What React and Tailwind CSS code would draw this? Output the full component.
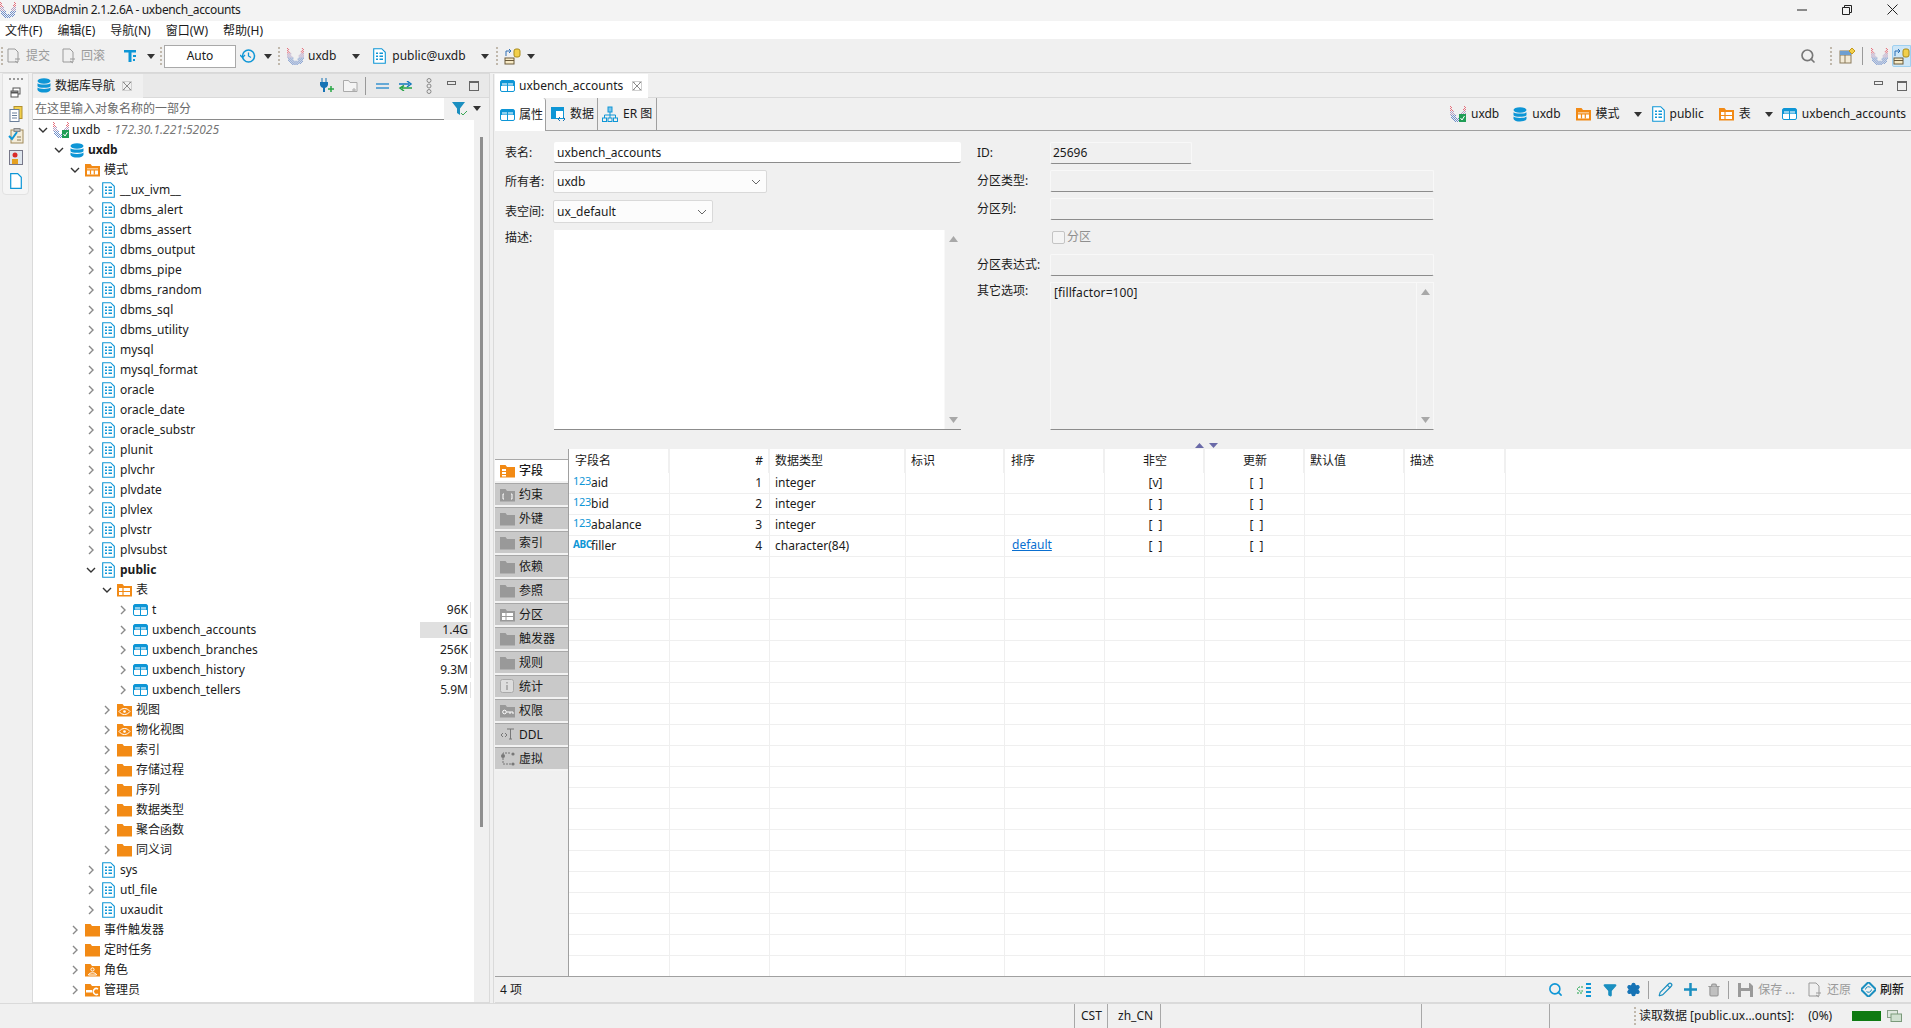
import React from 'react';
import { Search, Pencil, Trash2, Filter, Settings } from 'lucide-react';

const BLUE = '#0e96d6';
const ORANGE = '#f28a15';

// --- Small icon drawings ---
const UxLogo = ({ size = 16 }) => {
  // dotted wings of the product logo, red on top and blue at the bottom
  const dots = [];
  for (let y = 0; y < 16; y++) {
    for (let x = 0; x < 16; x++) {
      if ((x + y) % 2) continue;
      const dx = Math.abs(x - 7.5);
      const outer = y < 8 ? dx <= 7.5 : dx * dx + (y - 8) * (y - 8) <= 60;
      const inner = y < 12 && dx < 6.5 - y * 0.45;
      if (!outer || inner) continue;
      const color = y < 5 ? '#e5707c' : y < 9 ? '#b4a0c4' : '#6f8fca';
      dots.push(<rect key={`${x}-${y}`} x={x} y={y} width="1" height="1" fill={color} />);
    }
  }
  return <svg width={size} height={size} viewBox="0 0 16 16" className="shrink-0">{dots}</svg>;
};

const UxConnected = () => (
  <span className="relative inline-block w-[16px] h-[16px] shrink-0">
    <UxLogo />
    <svg width="7" height="8" viewBox="0 0 7 8" className="absolute right-0 bottom-0"><rect width="7" height="8" fill="#1f9d55" /><path d="M1.5 4l1.5 2 2.500-4" stroke="#fff" fill="none" /></svg>
  </span>
);

const DbIcon = () => (
  <svg width="14" height="15" viewBox="0 0 14 15" className="shrink-0">
    <ellipse cx="7" cy="3" rx="6.500" ry="2.800" fill={BLUE} />
    <path d="M.5 5.200c1 1.800 12 1.800 13 0v3c-1 2-12 2-13 0z" fill={BLUE} />
    <path d="M.5 9.600c1 1.800 12 1.800 13 0v2.400c-1 3.400-12 3.400-13 0z" fill={BLUE} />
  </svg>
);

const SchemaIcon = () => (
  <svg width="13" height="16" viewBox="0 0 13 16" className="shrink-0">
    <path d="M.7.7h8l3.600 3.600v11H.7z" fill="#fff" stroke={BLUE} strokeWidth="1.100" />
    <path d="M3 4.500h2v1.500H3zM6.500 4.500h3.500v1.500H6.500zM3 7.500h2V9H3zM6.500 7.500h3.500V9H6.500zM3 10.500h2V12H3zM6.500 10.500h3.500V12H6.500z" fill={BLUE} />
  </svg>
);

const TableIcon = () => (
  <svg width="15" height="12" viewBox="0 0 15 12" className="shrink-0">
    <rect x=".5" y=".5" width="14" height="11" rx="1.500" fill="#fff" stroke={BLUE} />
    <rect x="1" y="1" width="13" height="5" fill={BLUE} />
    <rect x="2" y="3" width="5" height="2.600" fill="#8fd0ee" />
    <rect x="8" y="3" width="5" height="2.600" fill="#8fd0ee" />
    <path d="M7.500 1v10" stroke={BLUE} />
  </svg>
);

const Folder = ({ color = ORANGE, children }) => (
  <svg width="15" height="14" viewBox="0 0 15 14" className="shrink-0">
    <path d="M0 1h5.500l1.500 2h8v10.500H0z" fill={color} />
    {children}
  </svg>
);

const FolderSchema = () => <Folder><path d="M2 5.500h11v6H2z" fill="#fff" /><path d="M2 6.800h11M5.500 7v4.500M9.300 7v4.500" stroke={ORANGE} strokeWidth="1.200" /></Folder>;
const FolderTable = () => <Folder><path d="M2 5h11v7H2z" fill="#fff" /><path d="M2 8.500h11M6 5v7" stroke={ORANGE} strokeWidth="1.200" /></Folder>;
const FolderEye = () => <Folder><path d="M2 8.500c3-4 8-4 11 0-3 4-8 4-11 0z" fill="none" stroke="#fff" /><circle cx="7.500" cy="8.500" r="1.300" fill="#fff" /></Folder>;
const FolderRole = () => <Folder><circle cx="7.500" cy="6.500" r="1.600" fill="none" stroke="#fff" /><path d="M3.500 12c0-3 8-3 8 0z" fill="none" stroke="#fff" /></Folder>;
const FolderAdmin = () => <Folder><path d="M1 7h6v2.500H1z" fill="#fff" /><path d="M13 6a3 3 0 1 0 0 5" fill="none" stroke="#fff" strokeWidth="1.500" /></Folder>;

const ICONS = {
  ux: <UxConnected />, db: <DbIcon />, schema: <SchemaIcon />, table: <TableIcon />, folder: <Folder />,
  fSchema: <FolderSchema />, fTable: <FolderTable />, fEye: <FolderEye />, fRole: <FolderRole />, fAdmin: <FolderAdmin />,
};

const Chevron = ({ open }) => (
  <svg width="10" height="10" viewBox="0 0 10 10">
    {open
      ? <path d="M1 3l4 4 4-4" stroke="#333" strokeWidth="1.400" fill="none" />
      : <path d="M3 1l4 4-4 4" stroke="#8a8a8a" strokeWidth="1.400" fill="none" />}
  </svg>
);

const Caret = ({ className = '' }) => (
  <svg width="8" height="5" viewBox="0 0 8 5" className={`shrink-0 ${className}`}><path d="M0 0h8L4 5z" fill="#333" /></svg>
);

const Grip = ({ className = '' }) => (
  <span className={`flex flex-col gap-[2px] shrink-0 ${className}`}>
    {[0, 1, 2, 3, 4].map(i => <span key={i} className="w-[2px] h-[2px] bg-[#c0b8ac]" />)}
  </span>
);

const DocAction = ({ color = '#9a9a9a' }) => (
  <svg width="14" height="16" viewBox="0 0 14 16" className="shrink-0">
    <path d="M1 1h7l3 3v10H1z" fill="none" stroke={color} />
    <path d="M8 11h5M8 13l3 2" stroke={color} />
  </svg>
);

const TreeTool = () => (
  <svg width="14" height="14" viewBox="0 0 14 14" className="shrink-0">
    <path d="M1 1h12v2.500H8.500V13H5.500V3.500H1z" fill={BLUE} />
    <path d="M10 6h3v2h-3zM10 10h2v2h-2z" fill={BLUE} />
  </svg>
);

const SwitchDb = ({ size = 17 }) => (
  <svg width={size} height={size} viewBox="0 0 17 17" className="shrink-0">
    <rect x="1" y="10" width="9" height="6" fill="#f7e9c4" stroke="#6b5a3a" />
    <path d="M1 12.500h9" stroke="#6b5a3a" />
    <path d="M2 8V3h5M5 1l2 2-2 2" stroke="#2f6fb5" fill="none" />
    <rect x="10" y="1" width="6" height="8" rx="2" fill="#f2cf4a" stroke="#a88b1c" />
  </svg>
);

const FunnelCheck = () => (
  <svg width="16" height="16" viewBox="0 0 16 16" className="shrink-0">
    <path d="M0 1h13L8 7.500V14L5 12V7.500z" fill="#1b8fc0" />
    <path d="M9 12l2 2 4-4" stroke="#3aa655" fill="none" />
  </svg>
);

const WinMin = () => <svg width="10" height="10" viewBox="0 0 10 10"><path d="M0 5h10" stroke="#222" /></svg>;
const WinRestore = () => <svg width="10" height="10" viewBox="0 0 10 10"><path d="M.5 2.500h7v7h-7zM2.500 2.500v-2h7v7h-2" fill="none" stroke="#222" /></svg>;
const WinClose = () => <svg width="11" height="11" viewBox="0 0 11 11"><path d="M.5.5l10 10M10.500.5l-10 10" stroke="#222" /></svg>;

const ViewMin = ({ className = '' }) => <span className={`block w-[9px] h-[4px] border border-[#666] shrink-0 ${className}`} />;
const ViewMax = ({ className = '' }) => <span className={`block w-[10px] h-[10px] border border-[#666] border-t-2 shrink-0 ${className}`} />;

const CloseX = () => (
  <svg width="10" height="10" viewBox="0 0 10 10" className="shrink-0"><path d="M1 1l8 8M9 1l-8 8M1 1h2M9 1H7M1 9h2M9 9H7" stroke="#8b8b8b" fill="none" /><rect x=".5" y=".5" width="9" height="9" fill="none" stroke="#d0d0d0" /></svg>
);

// --- Tree data ---
const SCHEMAS = ['__ux_ivm__', 'dbms_alert', 'dbms_assert', 'dbms_output', 'dbms_pipe', 'dbms_random', 'dbms_sql', 'dbms_utility', 'mysql', 'mysql_format', 'oracle', 'oracle_date', 'oracle_substr', 'plunit', 'plvchr', 'plvdate', 'plvlex', 'plvstr', 'plvsubst'];

const TREE = [
  { d: 0, icon: 'ux', label: 'uxdb', open: true, note: ' - 172.30.1.221:52025' },
  { d: 1, icon: 'db', label: 'uxdb', open: true, bold: true },
  { d: 2, icon: 'fSchema', label: '模式', open: true },
  ...SCHEMAS.map(label => ({ d: 3, icon: 'schema', label })),
  { d: 3, icon: 'schema', label: 'public', open: true, bold: true },
  { d: 4, icon: 'fTable', label: '表', open: true },
  { d: 5, icon: 'table', label: 't', size: '96K' },
  { d: 5, icon: 'table', label: 'uxbench_accounts', size: '1.4G', hot: true },
  { d: 5, icon: 'table', label: 'uxbench_branches', size: '256K' },
  { d: 5, icon: 'table', label: 'uxbench_history', size: '9.3M' },
  { d: 5, icon: 'table', label: 'uxbench_tellers', size: '5.9M' },
  { d: 4, icon: 'fEye', label: '视图' },
  { d: 4, icon: 'fEye', label: '物化视图' },
  { d: 4, icon: 'folder', label: '索引' },
  { d: 4, icon: 'folder', label: '存储过程' },
  { d: 4, icon: 'folder', label: '序列' },
  { d: 4, icon: 'folder', label: '数据类型' },
  { d: 4, icon: 'folder', label: '聚合函数' },
  { d: 4, icon: 'folder', label: '同义词' },
  { d: 3, icon: 'schema', label: 'sys' },
  { d: 3, icon: 'schema', label: 'utl_file' },
  { d: 3, icon: 'schema', label: 'uxaudit' },
  { d: 2, icon: 'folder', label: '事件触发器' },
  { d: 2, icon: 'folder', label: '定时任务' },
  { d: 2, icon: 'fRole', label: '角色' },
  { d: 2, icon: 'fAdmin', label: '管理员' },
];

const TreeRow = ({ node }) => (
  <div className="flex items-center h-[20px] relative">
    <span style={{ width: 15 + 16 * node.d }} className="flex justify-end shrink-0"><Chevron open={node.open} /></span>
    <span className="w-[15px] ml-[5px] flex justify-center shrink-0">{ICONS[node.icon]}</span>
    <span className={`ml-[4px] ${node.bold ? 'font-bold' : ''}`}>{node.label}</span>
    {node.note && <span className="ml-[7px] italic text-[#777]">{node.note}</span>}
    {node.size && (
      <span className={`absolute right-[3px] top-[2px] w-[51px] h-[16px] flex items-center justify-end pr-[2px] border-r border-[#e4e4e4] ${node.hot ? 'bg-[#e0e0e0]' : ''}`}>{node.size}</span>
    )}
  </div>
);

// --- Grid data ---
const COLUMNS = [
  { w: 'w-[101px]', label: '字段名', cls: 'pl-[6px]' },
  { w: 'w-[100px]', label: '#', cls: 'justify-end pr-[5px]' },
  { w: 'w-[136px]', label: '数据类型', cls: 'pl-[5px]' },
  { w: 'w-[99px]', label: '标识', cls: 'pl-[5px]' },
  { w: 'w-[100px]', label: '排序', cls: 'pl-[6px]' },
  { w: 'w-[100px]', label: '非空', cls: 'justify-center pl-[2px]' },
  { w: 'w-[100px]', label: '更新', cls: 'justify-center pl-[2px]' },
  { w: 'w-[100px]', label: '默认值', cls: 'pl-[5px]' },
  { w: 'w-[101px]', label: '描述', cls: 'pl-[5px]' },
];

const FIELDS = [
  { kind: '123', name: 'aid', type: 'integer', notNull: '[v]' },
  { kind: '123', name: 'bid', type: 'integer', notNull: '[  ]' },
  { kind: '123', name: 'abalance', type: 'integer', notNull: '[  ]' },
  { kind: 'ABC', name: 'filler', type: 'character(84)', notNull: '[  ]', order: 'default' },
];

const SIDE_TABS = [
  { label: '字段', active: true },
  { label: '约束', glyph: 'bracket' },
  { label: '外键' },
  { label: '索引' },
  { label: '依赖' },
  { label: '参照' },
  { label: '分区', glyph: 'table' },
  { label: '触发器' },
  { label: '规则' },
  { label: '统计', glyph: 'info' },
  { label: '权限', glyph: 'key' },
  { label: 'DDL', glyph: 'ddl' },
  { label: '虚拟', glyph: 'virtual' },
];

const SideGlyph = ({ tab }) => {
  if (tab.active) return <Folder><path d="M2 5h4v2H2zM2 8h4v2H2zM2 11h4v1.500H2z" fill="#fff" /></Folder>;
  if (tab.glyph === 'bracket') return <Folder color="#999"><path d="M4 6H3v5h1M11 6h1v5h-1" fill="none" stroke="#fff" /></Folder>;
  if (tab.glyph === 'table') return <Folder color="#999"><path d="M2 5h11v7H2z" fill="#fff" /><path d="M2 8.500h11M6 5v7" stroke="#999" /></Folder>;
  if (tab.glyph === 'key') return <Folder color="#999"><circle cx="4.500" cy="8" r="1.800" fill="none" stroke="#fff" /><path d="M6.500 8H13v2M10 8v2" stroke="#fff" fill="none" /></Folder>;
  if (tab.glyph === 'info') return <svg width="15" height="15" viewBox="0 0 15 15" className="shrink-0"><rect x=".5" y=".5" width="13" height="13" rx="2" fill="#ddd" stroke="#aaa" /><path d="M7 3v1.500M7 6v5" stroke="#999" strokeWidth="1.400" /></svg>;
  if (tab.glyph === 'ddl') return <svg width="15" height="13" viewBox="0 0 15 13" className="shrink-0"><path d="M3 5L1 7l2 2M5 5l2 2-2 2M7 1h7M10.500 1v10M9 11h3" stroke="#777" fill="none" /></svg>;
  if (tab.glyph === 'virtual') return <svg width="15" height="15" viewBox="0 0 15 15" className="shrink-0"><circle cx="3" cy="5" r="2" fill="#777" /><circle cx="13" cy="3" r="1.600" fill="#777" /><circle cx="13" cy="13" r="1.600" fill="#777" /><path d="M3 7v6h8M3 3V2h8" stroke="#777" fill="none" strokeDasharray="2 1" /></svg>;
  return <Folder color="#999" />;
};

const ScrollArrows = () => (
  <div className="absolute right-0 top-0 bottom-0 w-[17px] bg-[#f0f0f0] border-l border-[#f8f8f8] flex flex-col justify-between items-center py-[6px]">
    <svg width="9" height="6" viewBox="0 0 9 6"><path d="M4.500 0L9 6H0z" fill="#a8a8a8" /></svg>
    <svg width="9" height="6" viewBox="0 0 9 6"><path d="M0 0h9L4.500 6z" fill="#a8a8a8" /></svg>
  </div>
);

const ComboBox = ({ value, w }) => (
  <div className={`${w} h-[23px] bg-[#fcfcfc] border border-[#d9d9d9] rounded-[2px] flex items-center justify-between pl-[3px] pr-[5px]`}>
    <span>{value}</span>
    <svg width="10" height="6" viewBox="0 0 10 6"><path d="M1 1l4 4 4-4" stroke="#666" fill="none" /></svg>
  </div>
);

const ReadOnlyBox = ({ w = 'w-[384px]', children }) => (
  <div className={`${w} h-[22px] border border-[#f8f8f8] border-b-[#8c8c8c] rounded-[2px] flex items-center pl-[2px] pt-[1px]`}>{children}</div>
);

const BreadCrumb = ({ icon, label, caret, ml }) => (
  <span className={`flex items-center ${ml}`}>
    {icon}
    <span className="ml-[5px]">{label}</span>
    {caret && <Caret className="ml-[14px]" />}
  </span>
);

export default function App() {
  return (
    <div className="w-[1911px] h-[1028px] overflow-hidden flex flex-col bg-[#f0f0f0] text-[12px] text-[#1a1a1a] [font-family:'Noto_Sans','Noto_Sans_CJK_SC',sans-serif]">
      {/* Title bar */}
      <div className="h-[21px] bg-[#f3f3f3] flex items-center shrink-0 pb-[2px]">
        <UxLogo />
        <span className="ml-[6px] tracking-[-0.35px]">UXDBAdmin 2.1.2.6A - uxbench_accounts</span>
        <span className="ml-auto flex items-center">
          <WinMin />
          <span className="ml-[35px]"><WinRestore /></span>
          <span className="ml-[35px] mr-[13px]"><WinClose /></span>
        </span>
      </div>

      {/* Menu bar */}
      <div className="h-[18px] bg-white flex items-center pl-[5px] gap-[15px] pt-[2px] shrink-0">
        {['文件(F)', '编辑(E)', '导航(N)', '窗口(W)', '帮助(H)'].map(m => <span key={m}>{m}</span>)}
      </div>

      {/* Main toolbar */}
      <div className="h-[34px] flex items-center pt-[1px] border-b border-[#d8d8d8] shrink-0">
        <Grip className="ml-[1px]" />
        <span className="ml-[4px]"><DocAction /></span>
        <span className="ml-[5px] text-[#9a9a9a]">提交</span>
        <span className="ml-[12px]"><DocAction /></span>
        <span className="ml-[5px] text-[#9a9a9a]">回滚</span>
        <span className="ml-[18px]"><TreeTool /></span>
        <Caret className="ml-[10px]" />
        <Grip className="ml-[5px]" />
        <div className="ml-[2px] w-[72px] h-[23px] bg-white border border-[#a9a9a9] flex items-center justify-center">Auto</div>
        <svg width="16" height="16" viewBox="0 0 16 16" className="ml-[4px] shrink-0"><circle cx="8.500" cy="8" r="6" fill="none" stroke={BLUE} strokeWidth="1.500" /><path d="M8.500 4.500V8l2.500 1.500M0 7l2.500 2.500L5 7" fill="none" stroke={BLUE} strokeWidth="1.300" /></svg>
        <Caret className="ml-[8px]" />
        <Grip className="ml-[6px]" />
        <span className="ml-[7px]"><UxLogo size={17} /></span>
        <span className="ml-[4px]">uxdb</span>
        <Caret className="ml-[16px]" />
        <span className="ml-[13px]"><SchemaIcon /></span>
        <span className="ml-[6px]">public@uxdb</span>
        <Caret className="ml-[15px]" />
        <Grip className="ml-[7px]" />
        <span className="ml-[6px]"><SwitchDb /></span>
        <Caret className="ml-[6px]" />
        <span className="ml-auto"><Search size={16} strokeWidth={2.500} color="#777" /></span>
        <Grip className="ml-[14px]" />
        <svg width="16" height="16" viewBox="0 0 16 16" className="ml-[7px] shrink-0"><rect x="1" y="3" width="11" height="12" fill="#f3ead6" stroke="#8a7a5a" /><path d="M1 7h11M6 3v12" stroke="#8a7a5a" /><rect x="1" y="3" width="11" height="4" fill="#6f9fd0" /><path d="M13 0l3 3-3 3-3-3z" fill="#f2cf4a" stroke="#c49a1c" /></svg>
        <span className="ml-[7px] w-px h-[18px] bg-[#9a9a9a]" />
        <span className="ml-[8px]"><UxLogo size={17} /></span>
        <span className="ml-[4px] w-[19px] h-[22px] bg-[#cde6f7] border border-[#9fd0f0] rounded-l-[2px] flex items-center overflow-hidden"><SwitchDb /></span>
      </div>

      {/* Workbench */}
      <div className="flex-1 flex min-h-0">
        {/* Trim strip */}
        <div className="w-[32px] shrink-0 pl-[2px]">
          <div className="w-[27px] h-[122px] bg-[#f5f5f5] border border-[#e2e2e2] rounded-b-[4px] flex flex-col items-center pt-[4px]">
            <span className="flex gap-[2px]">{[0, 1, 2, 3].map(i => <span key={i} className="w-[2px] h-[2px] bg-[#999]" />)}</span>
            <svg width="12" height="12" viewBox="0 0 12 12" className="mt-[7px]"><rect x="3" y="1" width="7" height="6" fill="#fff" stroke="#555" /><rect x="1" y="4" width="7" height="6" fill="#fff" stroke="#555" /><path d="M1 5.500h7" stroke="#555" strokeWidth="2" /></svg>
            <svg width="14" height="16" viewBox="0 0 14 16" className="mt-[7px]"><rect x="5" y="0.500" width="8" height="12" fill="#f2cf4a" stroke="#b09030" /><rect x="1" y="3.500" width="9" height="12" fill="#fff" stroke="#6a7f9a" /><path d="M3 7h5M3 9.500h5M3 12h5" stroke="#6a7f9a" /></svg>
            <svg width="16" height="16" viewBox="0 0 16 16" className="mt-[6px]"><rect x="3" y="2" width="12" height="13" fill="#f4ecd8" stroke="#a08a5a" /><rect x="6" y="0.500" width="6" height="3" fill="#bbb" stroke="#888" /><path d="M1 8l3 3 5-7" stroke={BLUE} strokeWidth="2" fill="none" /><path d="M9 9h4M9 12h4" stroke="#8a7a5a" /></svg>
            <svg width="14" height="15" viewBox="0 0 14 15" className="mt-[6px]"><rect x=".5" y=".5" width="13" height="14" fill="#dfe6ee" stroke="#778" /><circle cx="6" cy="5" r="2.500" fill="#d92b2b" /><rect x="3" y="9" width="6" height="5" fill="#e5a020" /></svg>
            <svg width="12" height="16" viewBox="0 0 12 16" className="mt-[8px]"><path d="M.7.7h7l3.600 3.600v11H.7z" fill="#fff" stroke={BLUE} strokeWidth="1.200" /></svg>
          </div>
        </div>

        {/* Navigator panel */}
        <div className="w-[458px] shrink-0 border border-[#dadada] flex flex-col min-h-0">
          <div className="h-[24px] bg-[#e9e9e9] border-b border-[#dadada] flex items-center shrink-0">
            <div className="w-[110px] h-[24px] bg-[#f0f0f0] flex items-center pl-[4px] shrink-0 whitespace-nowrap">
              <DbIcon />
              <span className="ml-[4px]">数据库导航</span>
              <span className="ml-[7px]"><CloseX /></span>
            </div>
            <svg width="15" height="15" viewBox="0 0 15 15" className="ml-[177px] shrink-0"><path d="M2 1v3M6 1v3M0 4h8v3a4 4 0 0 1-3 3v4H3v-4a4 4 0 0 1-3-3z" fill="#1673b5" /><path d="M2 0v4M6 0v4" stroke="#1673b5" /><path d="M11 8v6M8 11h6" stroke="#28a745" strokeWidth="1.500" /></svg>
            <svg width="16" height="14" viewBox="0 0 16 14" className="ml-[8px] shrink-0"><path d="M.5 1.500h5l1.500 2h7v9H.5z" fill="#f4f4f4" stroke="#aaa" /><path d="M11 9v4M9 11h4" stroke="#aaa" /></svg>
            <span className="ml-[6px] w-px h-[18px] bg-[#999] shrink-0" />
            <svg width="13" height="6" viewBox="0 0 13 6" className="ml-[10px] shrink-0"><path d="M0 1h13M0 5h13" stroke="#3a94d0" strokeWidth="1.500" /></svg>
            <svg width="15" height="10" viewBox="0 0 15 10" className="ml-[9px] shrink-0"><path d="M1 3h10M9 0l4 3-4 3" stroke="#1378bd" strokeWidth="1.500" fill="none" /><path d="M14 7H4M6 4.500L2 7l4 3" stroke="#25a345" strokeWidth="1.500" fill="none" /></svg>
            <svg width="6" height="16" viewBox="0 0 6 16" className="ml-[13px] shrink-0"><circle cx="3" cy="2.500" r="2" fill="none" stroke="#888" /><circle cx="3" cy="8" r="2" fill="none" stroke="#888" /><circle cx="3" cy="13.500" r="2" fill="none" stroke="#888" /></svg>
            <ViewMin className="ml-[15px] -mt-[6px]" />
            <ViewMax className="ml-[13px]" />
          </div>
          <div className="h-[22px] flex shrink-0">
            <div className="w-[411px] bg-white border-b border-[#8a8a8a] flex items-center pl-[2px] pt-[1px] text-[#6a6a6a]">在这里输入对象名称的一部分</div>
            <span className="ml-[8px] mt-[3px]"><FunnelCheck /></span>
            <Caret className="ml-[5px] mt-[8px]" />
          </div>
          <div className="flex-1 flex min-h-0">
            <div className="w-[441px] bg-white overflow-hidden">
              {TREE.map((node, i) => <TreeRow key={i} node={node} />)}
            </div>
            <div className="flex-1 pl-[6px] pt-[17px]">
              <div className="w-[3px] h-[690px] bg-[#8f8f8f]" />
            </div>
          </div>
        </div>

        {/* Editor panel */}
        <div className="flex-1 mt-[1px] ml-[3px] border-l border-[#dadada] pl-px flex flex-col min-w-0">
          <div className="h-[24px] border-b border-[#dadada] flex items-center shrink-0">
            <div className="w-[153px] h-[24px] bg-white flex items-center pl-[5px] pt-[1px]">
              <TableIcon />
              <span className="ml-[4px]">uxbench_accounts</span>
              <span className="ml-[9px]"><CloseX /></span>
            </div>
            <ViewMin className="ml-auto -mt-[6px]" />
            <ViewMax className="ml-[14px] mr-[4px]" />
          </div>

          <div className="h-[33px] border-b border-[#a0a0a0] flex shrink-0 relative">
            <div className="w-[51px] h-[33px] bg-white border-r border-[#a0a0a0] rounded-tr-[3px] flex items-center pl-[5px]">
              <TableIcon /><span className="ml-[4px]">属性</span>
            </div>
            <div className="w-[52px] border-r border-[#a0a0a0] flex items-center pl-[5px]">
              <svg width="15" height="15" viewBox="0 0 15 15" className="shrink-0"><rect x=".5" y=".5" width="12" height="11" fill="#fff" stroke={BLUE} /><rect x="1" y="1" width="11" height="3" fill={BLUE} /><rect x="1" y="4" width="4" height="7" fill={BLUE} /><path d="M9 10l-2 2 2 2M12 10l2 2-2 2" stroke="#1673b5" fill="none" /></svg>
              <span className="ml-[4px]">数据</span>
            </div>
            <div className="w-[59px] border-r border-[#a0a0a0] flex items-center pl-[4px]">
              <svg width="16" height="16" viewBox="0 0 16 16" className="shrink-0"><rect x="6" y="1" width="4" height="5" fill="#7cc4ea" stroke={BLUE} /><path d="M8 6v3M2.500 12V9h11v3M8 9v3" stroke={BLUE} fill="none" /><rect x=".5" y="12" width="4" height="3.500" fill="none" stroke={BLUE} /><rect x="6" y="12" width="4" height="3.500" fill="none" stroke={BLUE} /><rect x="11.500" y="12" width="4" height="3.500" fill="none" stroke={BLUE} /></svg>
              <span className="ml-[5px]">ER 图</span>
            </div>
            <div className="ml-auto flex items-center pr-[5px]">
              <BreadCrumb icon={<UxConnected />} label="uxdb" />
              <BreadCrumb icon={<DbIcon />} label="uxdb" ml="ml-[14px]" />
              <BreadCrumb icon={<FolderSchema />} label="模式" caret ml="ml-[15px]" />
              <BreadCrumb icon={<SchemaIcon />} label="public" ml="ml-[10px]" />
              <BreadCrumb icon={<FolderTable />} label="表" caret ml="ml-[15px]" />
              <BreadCrumb icon={<TableIcon />} label="uxbench_accounts" ml="ml-[9px]" />
            </div>
          </div>

          {/* Properties form */}
          <div className="h-[318px] flex shrink-0">
            <div className="w-[482px] pl-[10px] pt-[11px] shrink-0">
              <div className="flex items-center h-[21px]">
                <span className="w-[49px]">表名:</span>
                <div className="w-[407px] h-[21px] bg-white border-b border-[#8c8c8c] rounded-[2px] flex items-center pl-[3px] pt-[1px]">uxbench_accounts</div>
              </div>
              <div className="flex items-center mt-[7px]">
                <span className="w-[48px]">所有者:</span>
                <ComboBox value="uxdb" w="w-[214px]" />
              </div>
              <div className="flex items-center mt-[7px]">
                <span className="w-[48px]">表空间:</span>
                <ComboBox value="ux_default" w="w-[160px]" />
              </div>
              <div className="flex mt-[7px]">
                <span className="w-[49px] -mt-[1px]">描述:</span>
                <div className="w-[407px] h-[200px] bg-white border-b border-[#8c8c8c] relative"><ScrollArrows /></div>
              </div>
            </div>
            <div className="pt-[11px]">
              <div className="flex items-center h-[21px]">
                <span className="w-[73px]">ID:</span>
                <ReadOnlyBox w="w-[142px]">25696</ReadOnlyBox>
              </div>
              <div className="flex items-center mt-[7px]">
                <span className="w-[73px]">分区类型:</span>
                <ReadOnlyBox />
              </div>
              <div className="flex items-center mt-[6px]">
                <span className="w-[73px]">分区列:</span>
                <ReadOnlyBox />
              </div>
              <div className="flex items-center h-[34px] pl-[75px] text-[#8f8f8f]">
                <span className="w-[13px] h-[13px] border border-[#c4c4c4] rounded-[2px] bg-[#f4f4f4] mr-[2px]" />
                分区
              </div>
              <div className="flex items-center">
                <span className="w-[73px]">分区表达式:</span>
                <ReadOnlyBox />
              </div>
              <div className="flex mt-[6px]">
                <span className="w-[73px]">其它选项:</span>
                <div className="w-[384px] h-[148px] border border-[#f8f8f8] border-b-[#8c8c8c] relative pl-[3px] pt-[1px] tracking-[0.1px]">
                  [fillfactor=100]
                  <ScrollArrows />
                </div>
              </div>
            </div>
            <div className="self-end mb-[1px] ml-[-239px] flex gap-[5px]">
              <svg width="9" height="5" viewBox="0 0 9 5"><path d="M4.500 0L9 5H0z" fill="#6a6aa8" /></svg>
              <svg width="9" height="5" viewBox="0 0 9 5"><path d="M0 0h9L4.500 5z" fill="#6a6aa8" /></svg>
            </div>
          </div>

          {/* Fields grid */}
          <div className="h-[528px] flex shrink-0 border-b border-[#a0a0a0]">
            <div className="w-[74px] shrink-0 border-r border-[#a0a0a0] pt-[10px]">
              {SIDE_TABS.map(tab => (
                <div key={tab.label} className={`h-[24px] flex items-center pl-[5px] border-t border-[#a8a8a8] border-b-2 border-b-[#f2f2f2] ${tab.active ? 'bg-white' : 'bg-[#c9c9c9]'}`}>
                  <span className="w-[15px] flex justify-center shrink-0"><SideGlyph tab={tab} /></span>
                  <span className={`ml-[4px] ${tab.active ? 'font-medium' : ''}`}>{tab.label}</span>
                </div>
              ))}
            </div>
            <div className="flex-1 bg-white overflow-hidden min-w-0">
              <div className="flex h-[24px]">
                {COLUMNS.map(col => (
                  <div key={col.label} className={`${col.w} border-r-2 border-[#f0f0f0] flex items-center ${col.cls}`}>{col.label}</div>
                ))}
              </div>
              {Array.from({ length: 24 }).map((_, i) => {
                const f = FIELDS[i];
                return (
                  <div key={i} className="flex h-[21px] border-b border-[#efefef]">
                    <div className="w-[101px] border-r border-[#efefef] flex items-center pl-[4px]">
                      {f && <span className={`text-[#0e96d6] w-[18px] shrink-0 -mt-[3px] ${f.kind === 'ABC' ? 'text-[10px] font-bold tracking-[-0.4px]' : 'text-[11px] tracking-[-0.3px]'}`}>{f.kind}</span>}
                      {f && f.name}
                    </div>
                    <div className="w-[100px] border-r border-[#efefef] flex items-center justify-end pr-[7px]">{f && i + 1}</div>
                    <div className="w-[136px] border-r border-[#efefef] flex items-center pl-[5px]">{f && f.type}</div>
                    <div className="w-[99px] border-r border-[#efefef]" />
                    <div className="w-[100px] border-r border-[#efefef] flex items-center pl-[7px] pb-[3px]">
                      {f && f.order && <span className="text-[#0a6fd0] underline">{f.order}</span>}
                    </div>
                    <div className="w-[100px] border-r border-[#efefef] flex items-center justify-center pl-[2px] whitespace-pre">{f && f.notNull}</div>
                    <div className="w-[100px] border-r border-[#efefef] flex items-center justify-center pl-[4px] whitespace-pre">{f && '[  ]'}</div>
                    <div className="w-[100px] border-r border-[#efefef]" />
                    <div className="w-[101px] border-r border-[#efefef]" />
                  </div>
                );
              })}
            </div>
          </div>

          {/* Grid toolbar */}
          <div className="flex-1 flex items-center pl-[5px] border-b border-[#dadada]">
            <span>4 项</span>
            <span className="ml-auto"><Search size={15} strokeWidth={2.500} color={BLUE} /></span>
            <svg width="16" height="14" viewBox="0 0 16 14" className="ml-[13px] shrink-0"><path d="M10 1h5M10 5h5M10 9h5M10 13h5" stroke={BLUE} strokeWidth="2" /><path d="M7 4H3L1 6l2 2h4M1 10h6" stroke="#1aa34a" fill="none" strokeDasharray="2 1" /></svg>
            <Filter size={14} color="#1b8fc0" fill="#1b8fc0" className="ml-[11px]" />
            <Settings size={15} color="#1673b5" fill="#1673b5" className="ml-[9px]" />
            <span className="ml-[7px] w-px h-[18px] bg-[#a0a0a0]" />
            <Pencil size={15} color="#1b8fc0" className="ml-[9px]" />
            <svg width="13" height="13" viewBox="0 0 13 13" className="ml-[11px] shrink-0"><path d="M6.500 0v13M0 6.500h13" stroke="#1b8fc0" strokeWidth="2.500" /></svg>
            <Trash2 size={14} color="#9a9a9a" fill="#c0c0c0" className="ml-[10px]" />
            <span className="ml-[7px] w-px h-[18px] bg-[#a0a0a0]" />
            <svg width="15" height="14" viewBox="0 0 15 14" className="ml-[9px] shrink-0"><path d="M0 0h12l3 3v11H0z" fill="#9a9a9a" /><rect x="3" y="0" width="8" height="5" fill="#efefef" /><rect x="3" y="8" width="9" height="6" fill="#efefef" /></svg>
            <span className="ml-[5px] text-[#9a9a9a]">保存 ...</span>
            <span className="ml-[13px]"><DocAction /></span>
            <span className="ml-[5px] text-[#9a9a9a]">还原</span>
            <svg width="15" height="15" viewBox="0 0 15 15" className="ml-[10px] shrink-0"><path d="M7.500 0L15 7.500 7.500 15 0 7.500z" fill="none" stroke="#1b8fc0" strokeWidth="2" /><path d="M4.500 7.500a3 3 0 0 1 5-2M10.500 7.500a3 3 0 0 1-5 2" stroke="#1b8fc0" fill="none" /></svg>
            <span className="ml-[4px] mr-[7px] font-medium">刷新</span>
          </div>
        </div>
      </div>

      {/* Status bar */}
      <div className="h-[25px] shrink-0 flex items-center border-t border-[#dadada]">
        <span className="ml-[1074px] w-px h-[24px] bg-[#a8a8a8]" />
        <span className="w-[32px] pl-[6px]">CST</span>
        <span className="w-px h-[24px] bg-[#a8a8a8]" />
        <span className="w-[52px] pl-[10px]">zh_CN</span>
        <span className="w-px h-[24px] bg-[#a8a8a8]" />
        <span className="ml-[260px] w-px h-[24px] bg-[#a8a8a8]" />
        <span className="ml-[127px] w-px h-[24px] bg-[#a8a8a8]" />
        <Grip className="ml-[84px]" />
        <span className="ml-[3px]">读取数据 [public.ux...ounts]:</span>
        <span className="ml-[14px]">(0%)</span>
        <span className="ml-[20px] w-[29px] h-[10px] bg-[#0f7a12]" />
        <svg width="15" height="12" viewBox="0 0 15 12" className="ml-[6px] shrink-0"><rect x=".5" y=".5" width="10" height="7" fill="#dfe8df" stroke="#8aa08a" /><rect x="4" y="4" width="10.500" height="7.500" fill="#cfe0cf" stroke="#7a9a7a" /></svg>
      </div>
    </div>
  );
}
